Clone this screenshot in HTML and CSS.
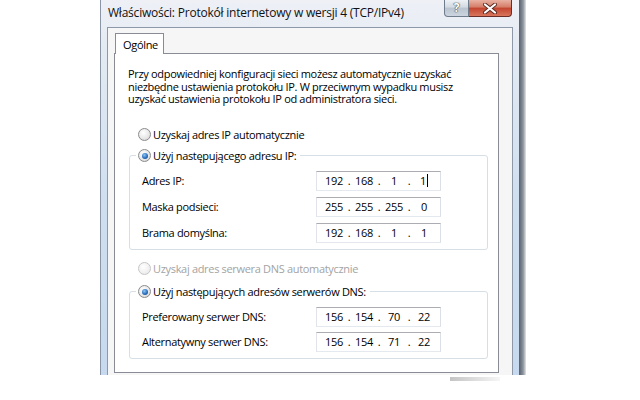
FILE: index.html
```html
<!DOCTYPE html>
<html lang="pl">
<head>
    <meta charset="UTF-8">
    <title>Właściwości: Protokół internetowy w wersji 4 (TCP/IPv4)</title>
    <link rel="stylesheet" href="styles.css">
</head>
<body>
    <div class="stage">
        <div class="window">
            <div class="titlebar">
                <span class="title">Właściwości: Protokół internetowy w wersji 4 (TCP/IPv4)</span>
                <div class="caption-buttons">
                    <span class="btn-help">?</span>
                    <span class="btn-close">
                        <svg width="16" height="11" viewBox="0 0 16 11">
                            <path d="M3 1.5 L13 9.5 M13 1.5 L3 9.5" stroke="#5a2a22" stroke-width="4" stroke-linecap="round"/>
                            <path d="M3 1.5 L13 9.5 M13 1.5 L3 9.5" stroke="#fff" stroke-width="2.2" stroke-linecap="round"/>
                        </svg>
                    </span>
                </div>
            </div>
            <div class="client">
                <div class="tabs">
                    <span class="tab">Ogólne</span>
                </div>
                <div class="page">
                    <p class="intro">Przy odpowiedniej konfiguracji sieci możesz automatycznie uzyskać niezbędne ustawienia protokołu IP. W przeciwnym wypadku musisz uzyskać ustawienia protokołu IP od administratora sieci.</p>

                    <div class="radio-row first"><span class="radio"></span>Uzyskaj adres IP automatycznie</div>
                    <fieldset class="group ip-group">
                        <legend class="radio-row"><span class="radio checked"></span>Użyj następującego adresu IP:</legend>
                        <div class="fields">
                            <label>Adres IP:</label>
                            <div class="ip"><span class="oct">192</span><span class="dot">.</span><span class="oct">168</span><span class="dot">.</span><span class="oct">1</span><span class="dot">.</span><span class="oct">1<span class="caret"></span></span></div>
                            <label>Maska podsieci:</label>
                            <div class="ip"><span class="oct">255</span><span class="dot">.</span><span class="oct">255</span><span class="dot">.</span><span class="oct">255</span><span class="dot">.</span><span class="oct">0</span></div>
                            <label>Brama domyślna:</label>
                            <div class="ip"><span class="oct">192</span><span class="dot">.</span><span class="oct">168</span><span class="dot">.</span><span class="oct">1</span><span class="dot">.</span><span class="oct">1</span></div>
                        </div>
                    </fieldset>

                    <div class="radio-row disabled"><span class="radio"></span>Uzyskaj adres serwera DNS automatycznie</div>
                    <fieldset class="group dns-group">
                        <legend class="radio-row"><span class="radio checked"></span>Użyj następujących adresów serwerów DNS:</legend>
                        <div class="fields dns">
                            <label>Preferowany serwer DNS:</label>
                            <div class="ip"><span class="oct">156</span><span class="dot">.</span><span class="oct">154</span><span class="dot">.</span><span class="oct">70</span><span class="dot">.</span><span class="oct">22</span></div>
                            <label>Alternatywny serwer DNS:</label>
                            <div class="ip"><span class="oct">156</span><span class="dot">.</span><span class="oct">154</span><span class="dot">.</span><span class="oct">71</span><span class="dot">.</span><span class="oct">22</span></div>
                        </div>
                    </fieldset>
                </div>
            </div>
        </div>
        <div class="shadow"></div>
    </div>
    <div class="below"></div>
</body>
</html>
```

FILE: styles.css
```css
body {
    margin: 0;
    width: 640px;
    height: 400px;
    overflow: hidden;
    background: #fff;
    font-family: "Open Sans", "Noto Sans", sans-serif;
    font-size: 11px;
    letter-spacing: -0.32px;
    color: #000;
}

.stage {
    display: flex;
    padding-left: 100px;
    height: 375px;
}

.window {
    width: 406px;
    height: 375px;
    padding: 0 6px 0 6px;
    border-left: 1px solid #8a96a6;
    background: linear-gradient(#eef0f6, #e2e9f2 60px, #cfdff0 200px, #c6d9ee);
    display: flex;
    flex-direction: column;
    overflow: hidden;
}

.shadow {
    width: 7px;
    height: 375px;
    background: linear-gradient(to right, #55606e, #8f969e 60%, #e4e6e8);
}

.titlebar {
    height: 27px;
    display: flex;
    justify-content: space-between;
    align-items: flex-start;
}

.title {
    padding-left: 1px;
    margin-top: 5px;
    font-size: 12px;
    letter-spacing: -0.22px;
    line-height: 16px;
    color: #111;
}

.caption-buttons {
    display: flex;
    margin-right: 1px;
}

.btn-help {
    width: 23px;
    height: 16px;
    border: 1px solid #6f7c8c;
    border-top: none;
    border-bottom-left-radius: 4px;
    background: linear-gradient(#eef1f5, #d3dae2 45%, #b9c4d0 50%, #ccd5df);
    color: #fff;
    font-size: 12px;
    font-weight: bold;
    line-height: 16px;
    text-align: center;
    text-shadow: 0 0 1px #3d4650, 0 0 1px #3d4650, 0 0 1px #3d4650;
}

.btn-close {
    width: 42px;
    height: 16px;
    border: 1px solid #6a2e28;
    border-top: none;
    border-left: none;
    border-bottom-right-radius: 4px;
    background: linear-gradient(#e9b2a4, #d47c66 45%, #c2442e 50%, #d9765c);
    display: flex;
    align-items: center;
    justify-content: center;
}

.client {
    flex: 1;
    border: 1px solid #8d99a8;
    border-bottom: none;
    background: #f6f6f6;
    padding: 5px 0 0 6px;
}

.tabs {
    display: flex;
    padding-left: 1px;
}

.tab {
    position: relative;
    z-index: 1;
    width: 49px;
    height: 21px;
    margin-bottom: -1px;
    border: 1px solid #898c95;
    border-bottom: none;
    background: #fff;
    padding-left: 7px;
    line-height: 21px;
    box-sizing: border-box;
}

.page {
    width: 385px;
    height: 320px;
    border: 1px solid #898c95;
    background: #fff;
    padding: 14px 0 0 13px;
    box-sizing: border-box;
}

.intro {
    margin: 0;
    width: 345px;
    line-height: 12.5px;
}

.radio-row {
    display: flex;
    align-items: center;
    height: 16px;
    gap: 2px;
}

.radio-row.first {
    margin: 21px 0 0 10px;
}

.radio-row.disabled {
    margin: 11px 0 0 10px;
    color: #a3a3a3;
}

.radio {
    width: 11px;
    height: 11px;
    border-radius: 50%;
    border: 1px solid #8b8b8b;
    background: radial-gradient(circle at 40% 35%, #fff, #e6e6e6 60%, #c9c9c9);
    display: flex;
    align-items: center;
    justify-content: center;
}

.radio.checked::after {
    content: "";
    width: 6px;
    height: 6px;
    border-radius: 50%;
    background: radial-gradient(circle at 40% 35%, #8fc6f2, #2a6fc0 55%, #0f3a78);
}

.disabled .radio {
    border-color: #c6c6c6;
    background: radial-gradient(circle at 40% 35%, #fff, #f0f0f0 60%, #e2e2e2);
}

.group {
    width: 334px;
    margin: 0 0 0 1px;
    padding: 7px 11px 6px 12px;
    border: 1px solid #d5dfe5;
    border-radius: 3px;
    min-width: 0;
}

.ip-group {
    margin-top: 5px;
}

.dns-group {
    margin-top: 7px;
}

.group legend {
    margin-left: -6px;
    padding: 0 4px 0 2px;
}

.fields {
    display: grid;
    grid-template-columns: 174px 125px;
    grid-auto-rows: 20px;
    row-gap: 6px;
}

.fields.dns {
    row-gap: 5px;
}

.fields label {
    display: flex;
    align-items: center;
}

.ip {
    display: flex;
    align-items: center;
    padding: 0 3px 0 4px;
    border: 1px solid;
    border-color: #abadb3 #dbdfe6 #e3e9ef #e2e3ea;
    background: #fff;
    box-sizing: border-box;
}

.oct {
    flex: 1;
    text-align: center;
}

.dot {
    width: 4px;
    text-align: center;
}

.caret {
    display: inline-block;
    width: 1px;
    height: 13px;
    margin-left: 1px;
    vertical-align: -2px;
    background: #000;
}

.below {
    width: 50px;
    height: 4px;
    margin: 2px 0 0 450px;
    background: linear-gradient(to right, #c4c4c4, #f6f6f6);
}
```
